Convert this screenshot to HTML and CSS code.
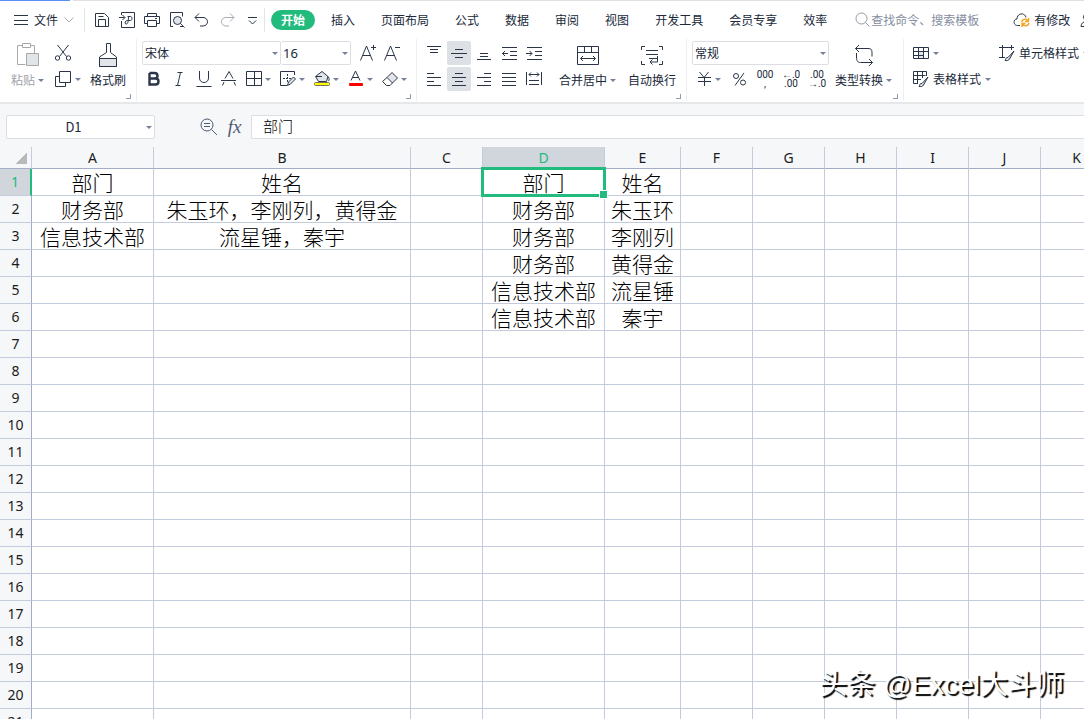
FILE: index.html
```
<!DOCTYPE html>
<html lang="zh-CN">
<head>
    <meta charset="UTF-8">
    <meta name="viewport" content="width=device-width, initial-scale=1.0">
    <title>表格</title>
    <link rel="stylesheet" href="styles.css">
</head>
<body>
    <div class="doc-tabs"><span class="doc-tab-active"></span><span class="doc-tab-rest"></span></div>

    <header class="menu-bar">
        <button class="file-menu">
            <svg width="14" height="12" viewBox="0 0 14 12"><path d="M0 1.500h14M0 6.500h14M0 10.500h14"/></svg>
            文件
            <svg class="muted" width="10" height="6" viewBox="0 0 10 6"><path d="M.5.5L5 5 9.500.5"/></svg>
        </button>
        <div class="quick-tools">
            <button aria-label="保存"><svg width="16" height="16" viewBox="0 0 16 16"><path d="M1.500 1.500h9l4 4v9h-13zM4.500 14V7.500h7V14M4.500 4.500h5"/></svg></button>
            <button aria-label="输出为PDF"><svg width="16" height="16" viewBox="0 0 16 16"><path d="M2.500 3V.5h13v15h-13V9M0 5.500h5.500M3.500 3l2.500 2.500L3.500 8M8.500 4.500h3c2 0 2 4 0 4h-3c-3 0-3 4-1 3.500 1.500 0 2-4 2-7.500"/></svg></button>
            <button aria-label="打印"><svg width="16" height="16" viewBox="0 0 16 16"><path d="M3.500 4.500v-3h9v3M3.500 11.500h-3v-7h15v7h-3M3.500 8.500h9v6h-9zM11 6.500h2"/></svg></button>
            <button aria-label="打印预览"><svg width="16" height="16" viewBox="0 0 16 16"><path d="M4 14.500H1.500V.5h12v4M11 14.500h3"/><circle class="tint" cx="8.500" cy="8.500" r="4"/><path d="M11.500 11.500l4 4"/></svg></button>
            <button aria-label="撤销"><svg width="16" height="16" viewBox="0 0 16 16"><path d="M5 1.500l-4 4 4 4M1 5.500h8c6 0 6 8.500 0 8.500H6"/></svg></button>
            <button aria-label="恢复" class="muted"><svg width="16" height="16" viewBox="0 0 16 16"><path d="M11 1.500l4 4-4 4M15 5.500H7c-6 0-6 8.500 0 8.500h3"/></svg></button>
            <button aria-label="更多"><svg width="16" height="16" viewBox="0 0 16 16"><path d="M4 5.500h9M5 8.500l3.500 3.500L12 8.500"/></svg></button>
        </div>
        <nav class="tabs">
            <a href="#" class="tab active">开始</a>
            <a href="#" class="tab">插入</a>
            <a href="#" class="tab">页面布局</a>
            <a href="#" class="tab">公式</a>
            <a href="#" class="tab">数据</a>
            <a href="#" class="tab">审阅</a>
            <a href="#" class="tab">视图</a>
            <a href="#" class="tab">开发工具</a>
            <a href="#" class="tab">会员专享</a>
            <a href="#" class="tab">效率</a>
        </nav>
        <label class="search">
            <svg width="16" height="16" viewBox="0 0 16 16"><circle cx="6.500" cy="6.500" r="5.500"/><path d="M10.500 10.500l4 4"/></svg>
            <input type="text" placeholder="查找命令、搜索模板" aria-label="查找命令">
        </label>
        <button class="sync">
            <svg width="18" height="16" viewBox="0 0 18 16"><path d="M7 13.500H4.500C0 13.500 0 7 4 7 4 .5 12.500.5 13 5.500"/><path class="orange" d="M8.500 10c1-3.500 5-3.500 6.500-1M15.500 6v3.500H12M16 11c-1 3.500-5 3.500-6.500 1M9 15v-3.500h3.500"/></svg>
            有修改
        </button>
        <button class="share" aria-label="协作"><svg width="16" height="16" viewBox="0 0 16 16"><circle cx="7" cy="5" r="3.500"/><path d="M1 14.500c0-7 12-7 12 0z"/></svg></button>
    </header>

    <section class="ribbon">
        <div class="group clipboard">
            <button class="big faded">
                <svg width="22" height="24" viewBox="0 0 22 24"><path d="M5 2.500H.5v19h8M13 2.500h4.500V10M5.500.5h8v4h-8z"/><path class="tint" d="M9.500 10.500h12v12h-12z"/></svg>
                <span class="caption">粘贴<i class="arrow"></i></span>
            </button>
            <div class="stack">
                <button aria-label="剪切"><svg width="20" height="20" viewBox="0 0 20 20"><path d="M4.500 2l9 11.500M15.500 2l-9 11.500"/><circle cx="4.500" cy="15" r="2.200"/><circle cx="15.500" cy="15" r="2.200"/></svg></button>
                <button aria-label="复制"><svg width="20" height="20" viewBox="0 0 20 20"><path d="M6.500 7.500h-4v10h10v-4M6.500 2.500h11v11h-11z"/></svg><i class="arrow"></i></button>
            </div>
            <button class="big">
                <svg width="20" height="24" viewBox="0 0 20 24"><path d="M8.500.5h4v9l6 4.500v9.500h-17V14l7-4.500z"/><path class="tint" d="M1.500 15.500h17v8h-17z"/></svg>
                <span class="caption">格式刷</span>
            </button>
            <i class="launcher"></i>
        </div>

        <div class="group">
            <div class="stack font-tools">
                <div class="row">
                    <div class="combo font-name"><select aria-label="字体"><option>宋体</option></select></div>
                    <div class="combo font-size"><select aria-label="字号"><option>16</option></select></div>
                    <button class="tool grow" aria-label="增大字号"><svg width="16" height="16" viewBox="0 0 16 16"><path d="M.5 15.500L6.500 1l6 14.500M3 10.500h7.500M11 2.500h5M13.500 0v5"/></svg></button>
                    <button class="tool" aria-label="减小字号"><svg width="16" height="16" viewBox="0 0 16 16"><path d="M.5 15.500L6.500 1l6 14.500M3 10.500h7.500M11 2.500h5"/></svg></button>
                </div>
                <div class="row spaced">
                    <button class="tool" aria-label="加粗"><svg width="16" height="16" viewBox="0 0 16 16"><path class="thick" d="M3.500 2h5c4 0 4 5.500 0 5.500h-5M3.500 7.500h6c4 0 4 6 0 6h-6zM3.500 2v11.500"/></svg></button>
                    <button class="tool" aria-label="倾斜"><svg width="16" height="16" viewBox="0 0 16 16"><path d="M6.500 1.500h5M4.500 14.500h5M9.500 1.500l-3 13"/></svg></button>
                    <button class="tool" aria-label="下划线"><svg width="16" height="16" viewBox="0 0 16 16"><path d="M3.500 0v7c0 6 9 6 9 0V0M.5 15.500h15"/></svg></button>
                    <button class="tool" aria-label="删除线"><svg width="16" height="16" viewBox="0 0 16 16"><path d="M4 7.500L8 .5l4 7M1.500 14.500L3 11M14.500 14.500L13 11M0 9.500h15"/></svg></button>
                    <button class="tool drop" aria-label="边框"><svg width="16" height="16" viewBox="0 0 16 16"><path d="M.5.5h15v14H.5zM8.500.5v14M.5 7.500h15"/></svg><i class="arrow"></i></button>
                    <button class="tool drop" aria-label="绘图边框"><svg width="16" height="16" viewBox="0 0 16 16"><path d="M7 14.500H.5V.5h14V4"/><path stroke-dasharray="2 1" d="M7.500 3v9M3 7.500h8"/><path class="tint" d="M7.500 14.500l1-3.500 5-5 2 2-5 5z"/></svg><i class="arrow"></i></button>
                    <button class="tool drop" aria-label="填充颜色"><svg width="16" height="16" viewBox="0 0 16 16"><path class="tint" d="M1.500 5.500l6.500-5 6 5-1.500 5h-8z"/><path d="M2 5.500h6M14 5.500c1.500 2 1.500 3 .5 4.500"/><rect x=".5" y="11.500" width="15" height="3" rx="1" fill="#ffff00" stroke="#77735d"/></svg><i class="arrow"></i></button>
                    <button class="tool drop" aria-label="字体颜色"><svg width="16" height="16" viewBox="0 0 16 16"><path d="M3 9.500L7.500 0 12 9.500M4.500 6.500h6"/><rect x="1" y="12" width="14" height="3" rx="1" fill="#ff0000" stroke="none"/></svg><i class="arrow"></i></button>
                    <button class="tool drop" aria-label="清除"><svg width="16" height="16" viewBox="0 0 16 16"><path class="tint" d="M5 6.500L10 1.500l5.500 5.500-5 5z"/><path d="M5 6.500L.5 10.500l4 4H8l2.500-2.500"/></svg><i class="arrow"></i></button>
                </div>
            </div>
            <i class="launcher"></i>
        </div>

        <div class="group align">
            <div class="stack">
                <div class="row spaced">
                    <button class="tool" aria-label="顶端对齐"><svg width="16" height="16" viewBox="0 0 16 16"><path d="M1 1.500h14M4 4.500h8M4 7.500h8"/></svg></button>
                    <button class="tool on" aria-label="垂直居中"><svg width="16" height="16" viewBox="0 0 16 16"><path d="M4 4.500h8M0 8.500h16M4 12.500h8"/></svg></button>
                    <button class="tool" aria-label="底端对齐"><svg width="16" height="16" viewBox="0 0 16 16"><path d="M4 8.500h8M4 11.500h8M1 14.500h14"/></svg></button>
                    <button class="tool" aria-label="减少缩进"><svg width="16" height="16" viewBox="0 0 16 16"><path d="M1 2.500h15M9 6.500h7M9 10.500h7M1 14.500h15M1 8.500h6M4 6L1.500 8.500 4 11"/></svg></button>
                    <button class="tool" aria-label="增加缩进"><svg width="16" height="16" viewBox="0 0 16 16"><path d="M1 2.500h15M9 6.500h7M9 10.500h7M1 14.500h15M0 8.500h6M3.500 6L6 8.500 3.500 11"/></svg></button>
                </div>
                <div class="row spaced">
                    <button class="tool" aria-label="左对齐"><svg width="16" height="16" viewBox="0 0 16 16"><path d="M1 2.500h7M1 6.500h14M1 10.500h7M1 14.500h14"/></svg></button>
                    <button class="tool on" aria-label="水平居中"><svg width="16" height="16" viewBox="0 0 16 16"><path d="M4 2.500h8M1 6.500h14M4 10.500h8M1 14.500h14"/></svg></button>
                    <button class="tool" aria-label="右对齐"><svg width="16" height="16" viewBox="0 0 16 16"><path d="M8 2.500h7M1 6.500h14M8 10.500h7M1 14.500h14"/></svg></button>
                    <button class="tool" aria-label="两端对齐"><svg width="16" height="16" viewBox="0 0 16 16"><path d="M1 2.500h14M1 6.500h14M1 10.500h14M1 14.500h14"/></svg></button>
                    <button class="tool" aria-label="分散对齐"><svg width="16" height="16" viewBox="0 0 16 16"><path d="M.5 1v13M15.500 1v13M3 3.500h10M5 1.500l-2 2 2 2M11 1.500l2 2-2 2M3 9.500h10M3 13.500h10"/></svg></button>
                </div>
            </div>
            <button class="big merge">
                <svg width="22" height="24" viewBox="0 0 22 24"><path d="M.5 3.500h21v18H.5zM.5 9.500h21M7.500 3.500v6M14.500 3.500v6M3.500 15.500h15M6 13l-2.500 2.500L6 18M16 13l2.500 2.500L16 18"/></svg>
                <span class="caption">合并居中<i class="arrow"></i></span>
            </button>
            <button class="big">
                <svg width="22" height="24" viewBox="0 0 22 24"><path d="M4 3.500H.5V7M18 3.500h3.500V7M4 21.500H.5V18M18 21.500h3.500V18M5 7.500h12M5 11.500h12M8 15.500h9M16.500 13v6H9M11.500 16.500L9 19l2.500 2.500"/></svg>
                <span class="caption">自动换行</span>
            </button>
            <i class="launcher"></i>
        </div>

        <div class="group number">
            <div class="stack number-tools">
                <div class="combo"><select aria-label="数字格式"><option>常规</option></select></div>
                <div class="row between">
                    <button class="tool drop" aria-label="货币"><svg width="16" height="16" viewBox="0 0 16 16"><path d="M3.500 1L8 6.500 12.500 1M2 6.500h13M2 10.500h13M8.500 6.500V15"/></svg><i class="arrow"></i></button>
                    <button class="tool" aria-label="百分比"><svg width="16" height="16" viewBox="0 0 16 16"><circle cx="5" cy="5" r="2.500"/><circle cx="12" cy="11.500" r="2.500"/><path d="M13 2L4 14.500"/></svg></button>
                    <button class="tool digits" aria-label="千位分隔"><span>000</span><span>,</span></button>
                    <button class="tool digits" aria-label="增加小数位"><span>←.0</span><span>.00</span></button>
                    <button class="tool digits" aria-label="减少小数位"><span>.00</span><span>→.0</span></button>
                </div>
            </div>
            <button class="big">
                <svg width="20" height="24" viewBox="0 0 20 24"><path d="M5 2L1.500 5.500 5 9M1.500 5.500H14c3 0 4 1 4 4v4M2.500 10v4c0 4 1 5.500 4 5.500h12M15 16l3.500 3.500L15 23"/></svg>
                <span class="caption">类型转换<i class="arrow"></i></span>
            </button>
            <i class="launcher"></i>
        </div>

        <div class="group styles">
            <div class="stack">
                <button class="labeled" aria-label="条件格式"><svg width="16" height="16" viewBox="0 0 16 16"><path class="tint" d="M5.500 6.500h5v4h-5zM5.500 10.500h5v3h-5z"/><path d="M.5 2.500h15v11H.5zM.5 6.500h15M.5 10.500h10M5.500 2.500v11M10.500 2.500v4M10.500 10.500v3"/></svg><i class="arrow"></i></button>
                <button class="labeled"><svg width="16" height="16" viewBox="0 0 16 16"><path d="M5 12.500H.5V.5h13V5M.5 4.500h12M.5 8.500H8M4.500.5v12M9.500.5V7"/><path class="tint" d="M6 15.500c1-1 0-3 3-3l6-6.500-4.500 8c-1 2-3 1.500-4.500 1.500z"/></svg>表格样式<i class="arrow"></i></button>
            </div>
            <div class="stack">
                <button class="labeled"><svg width="16" height="16" viewBox="0 0 16 16"><path d="M0 2.500h15M3.500 0v13M12.500 0v5M0 12.500h6"/><path class="tint" d="M6 15.500c1-1 0-3 3-3l6-6.500-4.500 8c-1 2-3 1.500-4.500 1.500z"/></svg>单元格样式<i class="arrow"></i></button>
            </div>
        </div>
    </section>

    <section class="formula-bar">
        <div class="combo name-box"><input type="text" value="D1" aria-label="名称框"></div>
        <button class="zoom" aria-label="浏览"><svg width="18" height="18" viewBox="0 0 18 18"><circle cx="7" cy="7" r="6"/><path d="M11.500 11.500L17 17M4 5.500h6M4 8.500h6"/></svg></button>
        <button class="fx" aria-label="插入函数">fx</button>
        <input class="formula" type="text" value="部门" aria-label="编辑栏">
    </section>

    <main class="sheet">
        <table class="grid">
            <colgroup>
                <col class="col-head"><col class="col-a"><col class="col-b"><col class="col-c"><col class="col-d"><col class="col-e">
                <col class="col-rest" span="6">
            </colgroup>
            <thead><tr id="columns"><th class="corner"></th></tr></thead>
            <tbody id="rows"></tbody>
        </table>
    </main>

    <div class="watermark">头条 @Excel大斗师</div>

    <script>
        const columns = ['A', 'B', 'C', 'D', 'E', 'F', 'G', 'H', 'I', 'J', 'K'];
        const data = [
            { A: '部门', B: '姓名', D: '部门', E: '姓名' },
            { A: '财务部', B: '朱玉环，李刚列，黄得金', D: '财务部', E: '朱玉环' },
            { A: '信息技术部', B: '流星锤，秦宇', D: '财务部', E: '李刚列' },
            { D: '财务部', E: '黄得金' },
            { D: '信息技术部', E: '流星锤' },
            { D: '信息技术部', E: '秦宇' }
        ];
        const active = { column: 'D', row: 1 };
        const totalRows = 21;

        // Column letters
        columns.forEach(name => {
            const th = document.createElement('th');
            th.textContent = name;
            if (name === active.column) th.className = 'current';
            document.getElementById('columns').appendChild(th);
        });

        // Row numbers and cells
        for (let i = 1; i <= totalRows; i++) {
            const tr = document.createElement('tr');
            const th = document.createElement('th');
            th.textContent = i;
            if (i === active.row) th.className = 'current';
            tr.appendChild(th);
            columns.forEach(name => {
                const td = document.createElement('td');
                td.textContent = (data[i - 1] || {})[name] || '';
                if (i === active.row && name === active.column) td.className = 'selected';
                tr.appendChild(td);
            });
            document.getElementById('rows').appendChild(tr);
        }
    </script>
</body>
</html>
```

FILE: styles.css
```
* {
    box-sizing: border-box;
}

body {
    margin: 0;
    height: 100vh;
    display: flex;
    flex-direction: column;
    overflow: hidden;
    background: #ffffff;
    color: #20293a;
    font-family: "Noto Sans CJK SC", sans-serif;
    font-size: 12px;
    line-height: 16px;
}

button, input, select {
    margin: 0;
    padding: 0;
    border: none;
    background: none;
    color: inherit;
    font: inherit;
    white-space: nowrap;
}

button {
    display: flex;
    align-items: center;
    justify-content: center;
    flex-shrink: 0;
}

svg {
    display: block;
    flex-shrink: 0;
    fill: none;
    stroke: #2b3548;
    stroke-width: 1;
    overflow: visible;
}

.tint {
    fill: #e1e4e8;
}

.thick {
    stroke-width: 2.4;
}

.orange {
    stroke: #f5a623;
    stroke-width: 1.5;
}

.muted,
.muted svg {
    stroke: #a7abb3;
}

.doc-tabs {
    display: flex;
    gap: 3px;
    height: 1px;
    flex-shrink: 0;
}

.doc-tab-active {
    width: 70px;
    background: #5b8ff5;
}

.doc-tab-rest {
    flex: 1;
    background: #dfe0e6;
}

/* menu bar */
.menu-bar {
    display: flex;
    align-items: center;
    height: 38px;
    flex-shrink: 0;
    overflow: hidden;
}

.file-menu {
    gap: 6px;
    height: 24px;
    padding: 0 10px 0 14px;
    border-right: 1px solid #e2e4e9;
}

.quick-tools {
    display: flex;
    align-items: center;
    gap: 9px;
    height: 24px;
    padding: 0 4px 0 9px;
    border-right: 1px solid #e2e4e9;
}

.tabs {
    display: flex;
    gap: 6px;
    padding-left: 6px;
    flex-shrink: 0;
}

.tab {
    height: 20px;
    padding: 0 10px;
    border-radius: 10px;
    color: inherit;
    line-height: 20px;
    text-decoration: none;
    white-space: nowrap;
}

.tab.active {
    background: #21bb7d;
    color: #ffffff;
    font-weight: 700;
}

.search {
    display: flex;
    align-items: center;
    margin-left: 18px;
    flex-shrink: 0;
}

.search svg {
    stroke: #9298a5;
}

.search input {
    width: 142px;
    outline: none;
}

.search input::placeholder {
    color: #858da0;
    opacity: 1;
}

.sync {
    gap: 3px;
}

.share {
    margin-left: 10px;
}

/* ribbon */
.ribbon {
    display: flex;
    height: 65px;
    flex-shrink: 0;
    border-bottom: 2px solid #e6e7e9;
    overflow: hidden;
}

.group {
    position: relative;
    display: flex;
    align-items: flex-start;
    flex-shrink: 0;
    height: 62px;
    padding: 2px 5px 0;
    border-right: 1px solid #eceef1;
}

.clipboard {
    gap: 9px;
    padding: 2px 10px 0 11px;
}

.align {
    gap: 12px;
    padding-right: 10px;
}

.merge {
    margin-left: 1px;
}

.number {
    gap: 6px;
    padding-right: 11px;
}

.styles {
    gap: 8px;
    padding-left: 9px;
    border-right: none;
}

.stack {
    display: flex;
    flex-direction: column;
    align-items: flex-start;
    gap: 2px;
}

.stack button {
    height: 24px;
    gap: 2px;
}

.row {
    display: flex;
}

.row.spaced {
    gap: 1px;
}

.row.between {
    justify-content: space-between;
}

.number-tools {
    width: 137px;
    align-items: stretch;
}

.tool {
    width: 24px;
    border-radius: 2px;
}

.tool.drop {
    width: 33px;
    padding-left: 4px;
    justify-content: flex-start;
    gap: 3px;
}

.tool.grow {
    margin-left: 5px;
}

.tool.on {
    background: #dde1e5;
}

.stack .digits {
    flex-direction: column;
    gap: 0;
    font-family: Roboto, sans-serif;
    font-size: 10px;
    line-height: 9px;
}

.big {
    flex-direction: column;
    gap: 5px;
    padding-top: 2px;
}

.faded {
    color: #a0a3aa;
}

.faded svg {
    stroke: #a8a8a8;
}

.caption {
    display: flex;
    align-items: center;
    gap: 3px;
}

.stack .labeled {
    gap: 4px;
}

.arrow,
.combo::after {
    border: 3px solid transparent;
    border-top-color: #76809a;
    border-bottom: none;
}

.launcher {
    position: absolute;
    right: 5px;
    bottom: 2px;
    width: 5px;
    height: 5px;
    border: solid #8e9ab0;
    border-width: 0 1px 1px 0;
}

.combo {
    position: relative;
    height: 24px;
    border: 1px solid #dcdee3;
    border-radius: 2px;
    background: #ffffff;
}

.combo::after {
    content: "";
    position: absolute;
    right: 2px;
    top: 10px;
    pointer-events: none;
}

.combo select,
.combo input {
    display: block;
    width: 100%;
    height: 22px;
    padding-left: 2px;
    appearance: none;
    outline: none;
}

.font-name {
    width: 139px;
}

.font-size {
    width: 70px;
    border-left: none;
}

.font-size select {
    font-family: "Noto Sans", sans-serif;
    font-size: 13px;
}

/* formula bar */
.formula-bar {
    display: flex;
    align-items: center;
    height: 43px;
    padding: 2px 0 0 6px;
    flex-shrink: 0;
    background: #f5f7f9;
}

.name-box {
    width: 149px;
}

.combo.name-box input {
    padding-right: 16px;
    text-align: center;
    font-size: 13px;
}

.zoom {
    margin-left: 45px;
}

.zoom svg {
    stroke: #4f5b73;
}

.fx {
    width: 33px;
    color: #4f5b73;
    font-family: "Liberation Serif", serif;
    font-size: 19px;
    font-style: italic;
}

.formula {
    flex: 1;
    height: 24px;
    padding: 0 0 3px 11px;
    border: 1px solid #dcdee3;
    border-right: none;
    border-radius: 2px 0 0 2px;
    background: #ffffff;
    color: #000000;
    font-size: 15px;
    font-weight: 300;
    outline: none;
}

/* sheet */
.sheet {
    flex: 1;
    min-height: 0;
    overflow: hidden;
}

.grid {
    width: 1113px;
    table-layout: fixed;
    border-collapse: separate;
    border-spacing: 0;
}

.col-head {
    width: 32px;
}

.col-a,
.col-d {
    width: 122px;
}

.col-b {
    width: 257px;
}

.col-c,
.col-rest {
    width: 72px;
}

.col-e {
    width: 76px;
}

.grid th {
    height: 27px;
    padding: 0;
    border: solid #c3cbdd;
    border-width: 0 1px 1px 0;
    background: #f5f7f9;
    color: #1b1b1b;
    font-family: "Noto Sans", sans-serif;
    font-size: 14px;
    font-weight: 400;
    line-height: 20px;
}

.grid tbody th {
    border-right-color: #a3adc7;
}

.grid thead th {
    height: 22px;
    border-bottom-color: #a3adc7;
}

.grid .corner {
    background: linear-gradient(135deg, transparent 50%, #b8b9bb 50%) no-repeat 16px 6px / 11px 11px #f5f7f9;
}

.grid th.current {
    background: #d1d5dc;
    color: #21bb7d;
}

.grid tbody th.current {
    border-right: 2px solid #21bb7d;
}

.grid td {
    height: 27px;
    padding: 0;
    border: solid #c3cbdd;
    border-width: 0 1px 1px 0;
    color: #000000;
    font-size: 21px;
    font-weight: 300;
    line-height: 26px;
    text-align: center;
    white-space: nowrap;
}

.selected {
    position: relative;
}

.selected::before {
    content: "";
    position: absolute;
    inset: -2px;
    border: 3px solid #21bb7d;
}

.selected::after {
    content: "";
    position: absolute;
    right: -4px;
    bottom: -4px;
    width: 7px;
    height: 7px;
    border: 1px solid #ffffff;
    background: #21bb7d;
}

.watermark {
    position: absolute;
    right: 20px;
    bottom: 14px;
    color: #ffffff;
    font-family: "Liberation Sans", "Noto Sans CJK SC", sans-serif;
    font-size: 28px;
    line-height: 40px;
    text-shadow: 2px 2px 1px #000000;
}
```
